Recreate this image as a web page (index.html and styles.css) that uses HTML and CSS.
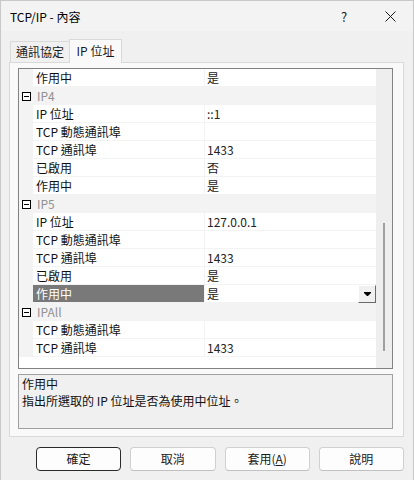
FILE: index.html
```html
<!DOCTYPE html>
<html lang="zh-Hant">
<head>
<meta charset="utf-8">
<title>TCP/IP - 內容</title>
<link rel="stylesheet" href="styles.css">
</head>
<body>
<div class="window">
  <div class="titlebar">
    <span class="title">TCP/IP - 內容</span>
    <div class="tb-controls">
      <span class="tb-btn help">?</span>
      <span class="tb-btn close">
        <svg width="11" height="11" viewBox="0 0 11 11"><path d="M0.5 0.5 L10.5 10.5 M10.5 0.5 L0.5 10.5" stroke="#1a1a1a" stroke-width="1" fill="none"/></svg>
      </span>
    </div>
  </div>
  <div class="content">
    <div class="tabs">
      <div class="tab">通訊協定</div>
      <div class="tab active">IP 位址</div>
    </div>
    <div class="panel">
      <div class="grid">
        <div class="rows">
          <div class="row prop"><div class="gutter"></div><div class="name">作用中</div><div class="value">是</div></div>
          <div class="row cat"><div class="gutter"><span class="minus"></span></div><div class="catname">IP4</div></div>
          <div class="row prop"><div class="gutter"></div><div class="name">IP 位址</div><div class="value">::1</div></div>
          <div class="row prop"><div class="gutter"></div><div class="name">TCP 動態通訊埠</div><div class="value"></div></div>
          <div class="row prop"><div class="gutter"></div><div class="name">TCP 通訊埠</div><div class="value">1433</div></div>
          <div class="row prop"><div class="gutter"></div><div class="name">已啟用</div><div class="value">否</div></div>
          <div class="row prop"><div class="gutter"></div><div class="name">作用中</div><div class="value">是</div></div>
          <div class="row cat"><div class="gutter"><span class="minus"></span></div><div class="catname">IP5</div></div>
          <div class="row prop"><div class="gutter"></div><div class="name">IP 位址</div><div class="value">127.0.0.1</div></div>
          <div class="row prop"><div class="gutter"></div><div class="name">TCP 動態通訊埠</div><div class="value"></div></div>
          <div class="row prop"><div class="gutter"></div><div class="name">TCP 通訊埠</div><div class="value">1433</div></div>
          <div class="row prop"><div class="gutter"></div><div class="name">已啟用</div><div class="value">是</div></div>
          <div class="row prop selected"><div class="gutter"></div><div class="name">作用中</div><div class="value"><span>是</span><span class="dropbtn"><svg width="7" height="5" viewBox="0 0 7 5"><path d="M0 0 H7 V1 L4 4 H3 L0 1 Z" fill="#000"/></svg></span></div></div>
          <div class="row cat"><div class="gutter"><span class="minus"></span></div><div class="catname">IPAll</div></div>
          <div class="row prop"><div class="gutter"></div><div class="name">TCP 動態通訊埠</div><div class="value"></div></div>
          <div class="row prop"><div class="gutter"></div><div class="name">TCP 通訊埠</div><div class="value">1433</div></div>
        </div>
        <div class="scrollbar"><div class="thumb"></div></div>
      </div>
      <div class="desc">
        <div class="desc-title">作用中</div>
        <div class="desc-text">指出所選取的 IP 位址是否為使用中位址。</div>
      </div>
    </div>
    <div class="buttons">
      <button class="btn default">確定</button>
      <button class="btn">取消</button>
      <button class="btn">套用(<u>A</u>)</button>
      <button class="btn">說明</button>
    </div>
  </div>
</div>
</body>
</html>
```
FILE: styles.css
```css
html, body {
  margin: 0;
  padding: 0;
  background: #f0f0f0;
}
.window {
  width: 414px;
  height: 480px;
  box-sizing: border-box;
  border: 1px solid #c8c8c8;
  border-bottom: none;
  background: #f0f0f0;
  font-family: "Noto Sans CJK TC", "Noto Sans", sans-serif;
  font-size: 12px;
  color: #1a1a1a;
  overflow: hidden;
}
.titlebar {
  height: 30px;
  display: flex;
  align-items: center;
  padding-left: 9px;
  background: #f3f3f3;
}
.title {
  font-size: 12px;
  color: #000;
}
.tb-controls {
  margin-left: auto;
  display: flex;
}
.tb-btn {
  width: 46px;
  height: 30px;
  display: flex;
  align-items: center;
  justify-content: center;
  font-size: 13px;
  color: #1a1a1a;
}
.content {
  padding: 8px 9px 0 8px;
}
.tabs {
  display: flex;
  align-items: flex-end;
  height: 23px;
}
.tab {
  box-sizing: border-box;
  height: 21px;
  width: 59px;
  margin-left: 1px;
  border: 1px solid #d9d9d9;
  border-bottom: none;
  border-right: none;
  background: #f0f0f0;
  display: flex;
  align-items: center;
  justify-content: center;
  line-height: 1;
}
.tab.active {
  height: 24px;
  width: 53px;
  margin-left: 0;
  margin-bottom: -1px;
  border-right: 1px solid #d9d9d9;
  background: #f9f9f9;
  position: relative;
  z-index: 1;
  padding-bottom: 2px;
}
.panel {
  box-sizing: border-box;
  height: 375px;
  border: 1px solid #d9d9d9;
  background: #f9f9f9;
  padding: 5px 10px 7px 8px;
}
.grid {
  box-sizing: border-box;
  height: 301px;
  border: 1px solid #828282;
  background: #fff;
  display: flex;
}
.rows {
  flex: 1;
  overflow: hidden;
}
.row {
  display: flex;
  height: 18px;
  background: #f3f3f3;
}
.gutter {
  width: 14px;
  flex: none;
  display: flex;
  align-items: center;
}
.name, .value {
  height: 17px;
  line-height: 17px;
  background: #fff;
  white-space: nowrap;
}
.name {
  width: 171px;
  margin-right: 1px;
  padding-left: 3px;
  box-sizing: border-box;
  color: #111;
}
.value {
  flex: 1;
  padding-left: 2px;
  color: #222;
  display: flex;
  align-items: center;
}
.selected .name {
  background: #797979;
  color: #fff;
}
.dropbtn {
  margin-left: auto;
  box-sizing: border-box;
  width: 18px;
  height: 18px;
  margin-top: 1px;
  background: #f0f0f0;
  border-top: 1px solid #fff;
  border-left: 1px solid #fff;
  border-right: 1px solid #696969;
  border-bottom: 1px solid #696969;
  display: flex;
  align-items: center;
  justify-content: center;
}
.cat {
  height: 18px;
  line-height: 18px;
}
.minus {
  box-sizing: border-box;
  width: 9px;
  height: 9px;
  margin-left: 3px;
  border: 1px solid #000;
  background: #fff;
  display: flex;
  align-items: center;
  justify-content: center;
}
.minus::after {
  content: "";
  width: 5px;
  height: 1px;
  background: #000;
}
.catname {
  padding-left: 4px;
  color: #929292;
}
.scrollbar {
  width: 16px;
  flex: none;
  background: #eeeeee;
  padding-top: 154px;
  box-sizing: border-box;
}
.thumb {
  width: 2px;
  height: 128px;
  margin-left: 7px;
  background: #a0a0a0;
}
.desc {
  box-sizing: border-box;
  height: 55px;
  margin-top: 5px;
  border: 1px solid #a0a0a0;
  background: #f0f0f0;
  padding: 0 3px;
  line-height: 17px;
  color: #111;
}
.buttons {
  display: flex;
  gap: 9px;
  margin-top: 10px;
  padding-left: 27px;
}
.btn {
  box-sizing: border-box;
  width: 86px;
  height: 24px;
  border: 1px solid #d0d0d0;
  border-bottom-color: #c0c0c0;
  border-radius: 4px;
  background: #fdfdfd;
  font-family: "Noto Sans CJK TC", "Noto Sans", sans-serif;
  font-size: 12px;
  color: #1a1a1a;
  padding: 0;
  line-height: 22px;
}
.btn.default {
  border: 1px solid #2a2a2a;
}
```
